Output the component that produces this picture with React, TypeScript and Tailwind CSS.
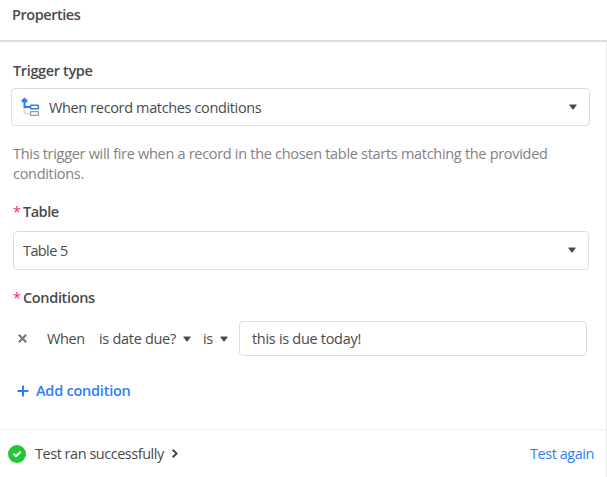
import React from "react";
import clsx from "clsx";

const Caret = ({ className }: { className?: string }) => (
  <svg
    className={clsx("shrink-0", className)}
    width="8"
    height="6"
    viewBox="0 0 8 6"
    fill="#4a4a4a"
  >
    <path d="M0.9 0.5h6.2c.4 0 .6.5.4.8L4.6 5.2a.8.8 0 0 1-1.2 0L.5 1.3C.3 1 .5.5.9.5z" />
  </svg>
);

const MatchIcon = () => (
  <svg className="shrink-0" width="20" height="20" viewBox="0 0 20 20" fill="none">
    <path d="M3.5 11v5.7H9" stroke="#dedede" strokeWidth="1.8" />
    <rect x="9.6" y="14.7" width="7.8" height="3.6" rx="0.4" stroke="#9b9b9b" strokeWidth="1.3" />
    <path d="M3.5 4v6H9" stroke="#2d7ff9" strokeWidth="2" />
    <path d="M3.1.8h.8l2.7 2.6v.8L5.2 5.6H1.8L.4 4.2v-.8z" fill="#2d7ff9" />
    <rect x="9.6" y="8.2" width="7.8" height="3.6" rx="0.4" stroke="#2d7ff9" strokeWidth="1.5" />
  </svg>
);

const RequiredLabel = ({ text, className }: { text: string; className: string }) => (
  <div className="flex h-5 items-center font-semibold">
    <span className="w-[10px] font-normal text-[#f82b60]">*</span>
    <span className={className}>{text}</span>
  </div>
);

const App = () => {
  return (
    <div className="flex h-[477px] w-[607px] flex-col overflow-hidden whitespace-nowrap bg-white font-['Open_Sans',sans-serif] text-[14.5px] leading-5 text-[#4a4a4a]">
      <header className="h-[42px] shrink-0 border-b-2 border-[#dddddd] pl-[12px] pt-[5px]">
        <h2 className="font-semibold tracking-[-0.45px]">Properties</h2>
      </header>
      <main className="flex flex-1 flex-col border-r border-[#e8e8e8]">
        <section className="flex h-[387px] flex-col pl-[13px] pt-[19px]">
          <h3 className="font-semibold tracking-[-0.36px]">Trigger type</h3>
          <button
            type="button"
            className="-ml-[2px] mt-[7px] flex h-[38px] w-[579px] items-center rounded border border-[#dddddd] pl-[9px] pr-[12px]"
          >
            <MatchIcon />
            <span className="ml-[8px] mt-px tracking-[-0.36px]">When record matches conditions</span>
            <Caret className="ml-auto" />
          </button>
          <p className="mt-[18px] w-[576px] whitespace-normal tracking-[-0.3px] text-[#828282]">
            This trigger will fire when a record in the chosen table starts matching the provided
            conditions.
          </p>
          <div className="mt-[18px]">
            <RequiredLabel text="Table" className="tracking-[-0.5px]" />
          </div>
          <button
            type="button"
            className="mt-[9px] flex h-[39px] w-[576px] items-center rounded border border-[#dddddd] pl-[9px] pr-[12px]"
          >
            <span className="tracking-[-0.6px]">Table 5</span>
            <Caret className="mb-px ml-auto" />
          </button>
          <div className="mt-[18px]">
            <RequiredLabel text="Conditions" className="tracking-[-0.35px]" />
          </div>
          <div className="mt-[13px] flex h-[35px] items-center">
            <button type="button" className="ml-[5px] w-[29px]">
              <svg width="9" height="9" viewBox="0 0 9 9" stroke="#777777" strokeWidth="2.1">
                <path d="M.8.8l7.4 7.4M8.2.8L.8 8.2" />
              </svg>
            </button>
            <span className="w-[52px] tracking-[-0.4px]">When</span>
            <span className="w-[84px] tracking-[-0.3px]">is date due?</span>
            <Caret />
            <span className="ml-[12px] w-[17px] tracking-[-0.35px]">is</span>
            <Caret />
            <div className="ml-[11px] flex h-[35px] w-[348px] items-center rounded border border-[#dddddd] pl-[12px]">
              <span className="tracking-[-0.3px]">this is due today!</span>
            </div>
          </div>
          <button
            type="button"
            className="mt-[25px] flex h-5 items-center pl-[4px] font-semibold text-[#2d7ff9]"
          >
            <svg width="12" height="12" viewBox="0 0 12 12" stroke="#2d7ff9" strokeWidth="2">
              <path d="M6 .5v11M.5 6h11" />
            </svg>
            <span className="ml-[7px] tracking-[-0.23px]">Add condition</span>
          </button>
        </section>
        <footer className="flex h-[48px] items-center border-t border-[#eeeeee] pl-[8px] pr-[12px]">
          <svg width="18" height="18" viewBox="0 0 18 18">
            <circle cx="9" cy="9" r="9" fill="#20c933" />
            <path
              d="M5.9 9.3l2 1.9 4.2-4"
              fill="none"
              stroke="white"
              strokeWidth="2"
              strokeLinecap="round"
              strokeLinejoin="round"
            />
          </svg>
          <span className="ml-[9px] w-[136px] tracking-[-0.47px]">Test ran successfully</span>
          <svg width="8" height="9" viewBox="0 0 8 9" fill="none" stroke="#444444" strokeWidth="1.9">
            <path d="M1.7 .8l3.9 3.7-3.9 3.7" />
          </svg>
          <a className="ml-auto tracking-[-0.45px] text-[#2d7ff9]">Test again</a>
        </footer>
      </main>
    </div>
  );
};

export default App;
